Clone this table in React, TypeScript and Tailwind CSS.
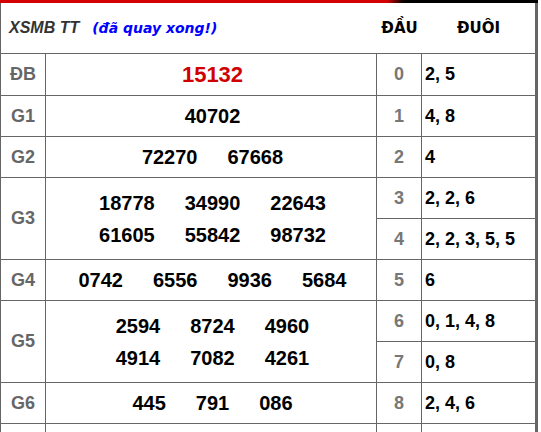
import React from "react";

function Label({ children, span }: { children?: React.ReactNode; span?: boolean }) {
  return (
    <div
      className={
        span
          ? "row-span-2 bg-white flex items-center justify-center text-[18px] font-bold text-[#666]"
          : "bg-white flex items-center justify-center text-[18px] font-bold text-[#666]"
      }
    >
      {children}
    </div>
  );
}

function Nums({ lines, span, red }: { lines: string[][]; span?: boolean; red?: boolean }) {
  const base = "bg-white flex flex-col items-center justify-center pl-[3px] font-bold";
  const tone = red ? "text-[22px] text-[#d10000]" : "text-[20px] text-black";
  return (
    <div className={`${base} ${tone} ${span ? "row-span-2" : ""}`}>
      {lines.map((l, i) => (
        <div key={i} className="flex gap-[30px] leading-[32px]">
          {l.map((n, j) => (
            <span key={j}>{n}</span>
          ))}
        </div>
      ))}
    </div>
  );
}

function Dau({ d }: { d?: string }) {
  return (
    <div className="bg-white flex items-center justify-center text-[18px] font-bold text-[#777]">{d}</div>
  );
}

function Duoi({ v }: { v?: string }) {
  return <div className="bg-white flex items-center pl-[3px] text-[18px] font-bold text-black">{v}</div>;
}

export default function App() {
  return (
    <div className="w-[538px] bg-white font-[family-name:Liberation_Sans,Arial,sans-serif]">
      <div className="h-[3px] bg-[linear-gradient(90deg,#d30000_0%,#d30000_72%,#000_75%,#000_100%)]" />
      <div className="grid grid-cols-[44px_330px_44px_113px] grid-rows-[50px_41px_40px_40px_40px_40px_40px_40px_40px_40px_40px] gap-px bg-[#666] pl-px pr-[3px]">
        <div className="col-span-4 bg-white grid grid-cols-[376px_45px_113px] items-center">
          <div className="pl-[8px] flex items-baseline font-bold italic">
            <span className="text-[16px] text-[#333]">XSMB TT</span>
            <span className="ml-[13px] text-[14px] text-[#0000ff] font-[family-name:DejaVu_Sans,Verdana,sans-serif]">
              (đã quay xong!)
            </span>
          </div>
          <div className="text-center text-[15px] font-bold text-black font-[family-name:DejaVu_Sans,Verdana,sans-serif]">
            ĐẦU
          </div>
          <div className="text-center text-[15px] font-bold text-black font-[family-name:DejaVu_Sans,Verdana,sans-serif]">
            ĐUÔI
          </div>
        </div>

        <Label>ĐB</Label>
        <Nums red lines={[["15132"]]} />
        <Dau d="0" />
        <Duoi v="2, 5" />

        <Label>G1</Label>
        <Nums lines={[["40702"]]} />
        <Dau d="1" />
        <Duoi v="4, 8" />

        <Label>G2</Label>
        <Nums lines={[["72270", "67668"]]} />
        <Dau d="2" />
        <Duoi v="4" />

        <Label span>G3</Label>
        <Nums
          span
          lines={[
            ["18778", "34990", "22643"],
            ["61605", "55842", "98732"],
          ]}
        />
        <Dau d="3" />
        <Duoi v="2, 2, 6" />
        <Dau d="4" />
        <Duoi v="2, 2, 3, 5, 5" />

        <Label>G4</Label>
        <Nums lines={[["0742", "6556", "9936", "5684"]]} />
        <Dau d="5" />
        <Duoi v="6" />

        <Label span>G5</Label>
        <Nums
          span
          lines={[
            ["2594", "8724", "4960"],
            ["4914", "7082", "4261"],
          ]}
        />
        <Dau d="6" />
        <Duoi v="0, 1, 4, 8" />
        <Dau d="7" />
        <Duoi v="0, 8" />

        <Label>G6</Label>
        <Nums lines={[["445", "791", "086"]]} />
        <Dau d="8" />
        <Duoi v="2, 4, 6" />

        <Label />
        <div className="bg-white" />
        <Dau />
        <Duoi />
      </div>
    </div>
  );
}
